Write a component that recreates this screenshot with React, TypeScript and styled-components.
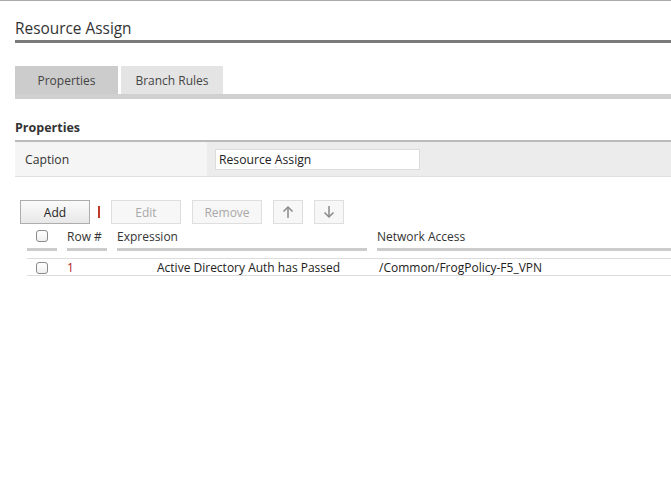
import React from "react";
import styled, { createGlobalStyle } from "styled-components";

const Global = createGlobalStyle`
  html, body { margin: 0; padding: 0; background: #fff; }
  body { font-family: "Open Sans", sans-serif; color: #333; }
`;

const Page = styled.div`
  border-top: 1px solid #aaa;
  padding: 0 0 0 15px;
  width: 656px;
  overflow: hidden;
`;

const Title = styled.h1`
  margin: 0;
  font-size: 15.4px;
  font-weight: 400;
  color: #333;
  padding-top: 17px;
  height: 22px;
  line-height: 22px;
  border-bottom: 3px solid #7a7a7a;
`;

const TabBar = styled.div`
  display: flex;
  gap: 3px;
  margin-top: 23px;
  border-bottom: 5px solid #d0d0d0;
`;

const Tab = styled.div<{ $active?: boolean }>`
  width: ${(p) => (p.$active ? 103 : 102)}px;
  height: 28px;
  display: flex;
  align-items: center;
  justify-content: center;
  font-size: 12px;
  color: #444;
  background: ${(p) => (p.$active ? "#cccccc" : "#e4e4e4")};
`;

const SectionHead = styled.div`
  margin-top: 20px;
  font-size: 12.5px;
  line-height: 17px;
  font-weight: 700;
  color: #333;
  padding-bottom: 4px;
  border-bottom: 2px solid #bbb;
`;

const PropRow = styled.div`
  display: flex;
  height: 34px;
  border-bottom: 1px solid #e0e0e0;
`;

const PropLabel = styled.div`
  width: 182px;
  padding-left: 10px;
  background: #f5f5f5;
  display: flex;
  align-items: center;
  font-size: 12.2px;
  color: #333;
`;

const PropValue = styled.div`
  flex: 1;
  background: #ececec;
  display: flex;
  align-items: center;
  padding-left: 8px;
`;

const TextInput = styled.input`
  box-sizing: border-box;
  width: 205px;
  height: 21px;
  border: 1px solid #dcdcdc;
  background: #fff;
  font-family: "Open Sans", sans-serif;
  font-size: 12.2px;
  color: #222;
  padding: 0 3px;
  outline: none;
`;

const Toolbar = styled.div`
  display: flex;
  align-items: center;
  margin-top: 23px;
  padding-left: 5px;
  height: 24px;
`;

const Button = styled.button<{ $disabled?: boolean; $w?: number }>`
  box-sizing: border-box;
  width: ${(p) => p.$w ?? 70}px;
  height: 24px;
  margin-right: 11px;
  font-family: "Open Sans", sans-serif;
  font-size: 12px;
  padding: 0;
  display: flex;
  align-items: center;
  justify-content: center;
  color: ${(p) => (p.$disabled ? "#a8a8a8" : "#222")};
  border: 1px solid ${(p) => (p.$disabled ? "#dedede" : "#adadad")};
  background: ${(p) =>
    p.$disabled
      ? "#f7f7f7"
      : "linear-gradient(#fafafa, #e8e8e8)"};
`;

const Sep = styled.span`
  width: 2px;
  height: 12px;
  background: #c0392b;
  margin: 0 11px 0 -3px;
`;

const Table = styled.div`
  margin-left: 12px;
  margin-top: 3px;
`;

const HeadRow = styled.div`
  display: grid;
  grid-template-columns: 30px 40px 250px 1fr;
  column-gap: 10px;
  height: 24px;
  font-size: 12px;
  color: #333;
`;

const HeadCell = styled.div<{ $center?: boolean }>`
  display: flex;
  align-items: center;
  justify-content: ${(p) => (p.$center ? "center" : "flex-start")};
  border-bottom: 3px solid #cccccc;
  padding-bottom: 3px;
`;

const Spacer = styled.div`
  height: 7px;
`;

const BodyRow = styled.div`
  display: grid;
  grid-template-columns: 30px 40px 250px 1fr;
  column-gap: 10px;
  height: 16px;
  border-top: 1px solid #dcdcdc;
  border-bottom: 1px solid #dcdcdc;
  font-size: 12px;
  color: #222;
  align-items: center;
`;

const Cell = styled.div<{ $center?: boolean; $pad?: number; $red?: boolean }>`
  display: flex;
  align-items: center;
  justify-content: ${(p) => (p.$center ? "center" : "flex-start")};
  padding-left: ${(p) => p.$pad ?? 0}px;
  color: ${(p) => (p.$red ? "#b22222" : "inherit")};
  white-space: nowrap;
`;

const Check = styled.span`
  box-sizing: border-box;
  width: 12px;
  height: 12px;
  border: 1px solid #8a8a8a;
  border-radius: 3px;
  background: linear-gradient(#fff, #f0f0f0);
`;

const Arrow = ({ down }: { down?: boolean }) => (
  <svg width="12" height="14" viewBox="0 0 12 14" fill="none" stroke="#8a8a8a" strokeWidth="1.5">
    {down ? (
      <>
        <path d="M6 1v11" />
        <path d="M1.5 7.5L6 12l4.5-4.5" />
      </>
    ) : (
      <>
        <path d="M6 13V2" />
        <path d="M1.5 6.5L6 2l4.5 4.5" />
      </>
    )}
  </svg>
);

export default function App() {
  return (
    <>
      <Global />
      <Page>
        <Title>Resource Assign</Title>
        <TabBar>
          <Tab $active>Properties</Tab>
          <Tab>Branch Rules</Tab>
        </TabBar>
        <SectionHead>Properties</SectionHead>
        <PropRow>
          <PropLabel>Caption</PropLabel>
          <PropValue>
            <TextInput defaultValue="Resource Assign" />
          </PropValue>
        </PropRow>
        <Toolbar>
          <Button>Add</Button>
          <Sep />
          <Button $disabled>Edit</Button>
          <Button $disabled>Remove</Button>
          <Button $disabled $w={30}>
            <Arrow />
          </Button>
          <Button $disabled $w={30}>
            <Arrow down />
          </Button>
        </Toolbar>
        <Table>
          <HeadRow>
            <HeadCell $center>
              <Check />
            </HeadCell>
            <HeadCell>Row #</HeadCell>
            <HeadCell>Expression</HeadCell>
            <HeadCell>Network Access</HeadCell>
          </HeadRow>
          <Spacer />
          <BodyRow>
            <Cell $center>
              <Check />
            </Cell>
            <Cell $red>1</Cell>
            <Cell $pad={40}>Active Directory Auth has Passed</Cell>
            <Cell $pad={2}>/Common/FrogPolicy-F5_VPN</Cell>
          </BodyRow>
        </Table>
      </Page>
    </>
  );
}
